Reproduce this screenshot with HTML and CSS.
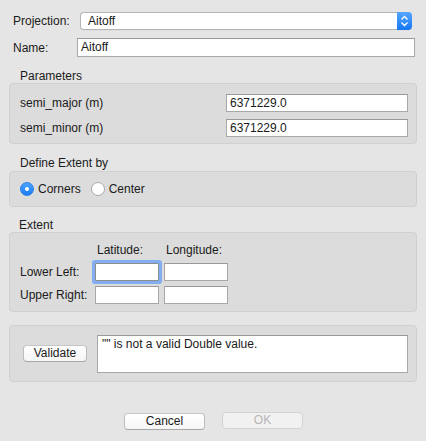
FILE: index.html
```html
<!DOCTYPE html>
<html>
<head>
<meta charset="utf-8">
<link rel="stylesheet" href="styles.css">
</head>
<body>
<div class="dialog">
  <div class="row row-proj">
    <span class="lbl proj-lbl">Projection:</span>
    <div class="popup">
      <span class="popup-text">Aitoff</span>
      <span class="stepper">
        <svg width="15" height="18" viewBox="0 0 15 18"><path d="M4.5 7.5 L7.5 4.5 L10.5 7.5 M4.5 10.5 L7.5 13.5 L10.5 10.5" fill="none" stroke="#fff" stroke-width="1.4"/></svg>
      </span>
    </div>
  </div>
  <div class="row row-name">
    <span class="lbl name-lbl">Name:</span>
    <div class="field name-field">Aitoff</div>
  </div>

  <div class="sec-lbl">Parameters</div>
  <div class="box params">
    <div class="prow"><span class="lbl">semi_major (m)</span><div class="field pfield">6371229.0</div></div>
    <div class="prow"><span class="lbl">semi_minor (m)</span><div class="field pfield">6371229.0</div></div>
  </div>

  <div class="sec-lbl">Define Extent by</div>
  <div class="box define">
    <span class="radio on"></span><span class="lbl rlbl">Corners</span>
    <span class="radio"></span><span class="lbl rlbl">Center</span>
  </div>

  <div class="sec-lbl ext-lbl">Extent</div>
  <div class="box extent">
    <span class="corner"></span><span class="lbl hdr">Latitude:</span><span class="lbl hdr">Longitude:</span>
    <span class="lbl rowlbl">Lower Left:</span><div class="field efield focus"></div><div class="field efield"></div>
    <span class="lbl rowlbl">Upper Right:</span><div class="field efield"></div><div class="field efield"></div>
  </div>

  <div class="box validate">
    <div class="btn vbtn">Validate</div>
    <div class="field msg">"" is not a valid Double value.</div>
  </div>

  <div class="buttons">
    <div class="btn bbtn">Cancel</div>
    <div class="btn bbtn disabled">OK</div>
  </div>
</div>
</body>
</html>
```

FILE: styles.css
```css
html, body {
  margin: 0;
  padding: 0;
  background: #e5e5e5;
}
body {
  font-family: "Liberation Sans", Arial, sans-serif;
  font-size: 12px;
  color: #1a1a1a;
  width: 426px;
  height: 441px;
  overflow: hidden;
}
.dialog {
  display: flex;
  flex-direction: column;
  padding: 12px 9px 0 9px;
}
.row {
  display: flex;
  align-items: center;
}
.lbl {
  line-height: 14px;
  white-space: nowrap;
}
.row-proj {
  height: 18px;
}
.proj-lbl {
  margin-left: 4px;
  width: 67px;
}
.popup {
  flex: 1;
  margin-right: 5px;
  height: 18px;
  box-sizing: border-box;
  display: flex;
  align-items: center;
  background: #fff;
  border: 1px solid #b4b4b4;
  border-right: none;
  border-radius: 4px;
  box-shadow: 0 0.5px 0 rgba(0,0,0,0.05);
}
.popup-text {
  flex: 1;
  padding-left: 7px;
}
.stepper {
  width: 15px;
  height: 18px;
  margin-top: -1px;
  margin-bottom: -1px;
  background: linear-gradient(#55a6ff, #1677f4);
  border-radius: 0 4px 4px 0;
  display: flex;
}
.row-name {
  margin-top: 8px;
  height: 19px;
}
.name-lbl {
  margin-left: 4px;
  width: 64px;
}
.field {
  box-sizing: border-box;
  background: #fff;
  border: 1px solid #a8a8a8;
  border-top-color: #999;
  line-height: 16px;
  padding-left: 3px;
}
.name-field {
  flex: 1;
  height: 19px;
  margin-right: 2px;
  line-height: 17px;
}
.sec-lbl {
  margin-top: 12px;
  padding-left: 11px;
  line-height: 14px;
  height: 14px;
}
.box {
  box-sizing: border-box;
  background: #dcdcdc;
  border: 1px solid #d0d0d0;
  border-radius: 4px;
}
.params {
  padding: 10px 8px 6px 10px;
  display: flex;
  flex-direction: column;
  gap: 7px;
}
.prow {
  display: flex;
  align-items: center;
  justify-content: space-between;
  height: 18px;
}
.pfield {
  width: 182px;
  height: 18px;
}
.define {
  margin-top: 1px;
  height: 36px;
  display: flex;
  align-items: center;
  padding-left: 10px;
}
.radio {
  width: 14px;
  height: 14px;
  box-sizing: border-box;
  border-radius: 50%;
  background: #fff;
  border: 1px solid #a9a9a9;
  margin-right: 4px;
  position: relative;
}
.radio.on {
  background: linear-gradient(#4ea3ff, #1a7cf6);
  border-color: #2a7fe8;
}
.radio.on::after {
  content: "";
  position: absolute;
  left: 4px;
  top: 4px;
  width: 4px;
  height: 4px;
  border-radius: 50%;
  background: #fff;
}
.rlbl {
  margin-right: 10px;
}
.ext-lbl {
  margin-top: 11px;
  padding-left: 10px;
}
.extent {
  display: grid;
  grid-template-columns: 70px 64px 64px;
  grid-template-rows: 14px 18px 18px;
  column-gap: 5px;
  row-gap: 5px;
  padding: 10px 8px 8px 10px;
  align-items: center;
}
.extent .hdr {
  padding-left: 2px;
  align-self: start;
}
.rowlbl,
.efield {
  margin-top: 1px;
}
.efield {
  height: 18px;
}
.focus {
  box-shadow: 0 0 0 3px #82aef0;
  border-radius: 1px;
  border-color: #8d8d8d;
}
.validate {
  margin-top: 13px;
  display: flex;
  align-items: center;
  padding: 9px 8px 8px 13px;
}
.btn {
  box-sizing: border-box;
  height: 17px;
  line-height: 15px;
  text-align: center;
  background: linear-gradient(#ffffff, #f6f6f6);
  border: 1px solid #bcbcbc;
  border-top-color: #c6c6c6;
  border-bottom-color: #a8a8a8;
  border-radius: 4px;
}
.vbtn {
  width: 64px;
  margin-right: 10px;
  margin-top: -2px;
}
.msg {
  flex: 1;
  height: 38px;
  line-height: 14px;
  padding: 1px 4px;
}
.buttons {
  margin-top: 31px;
  display: flex;
  justify-content: center;
  gap: 17px;
  padding-left: 1px;
}
.bbtn {
  width: 81px;
}
.disabled {
  background: #f1f1f1;
  color: #b5b5b5;
  border-color: #d3d3d3;
  margin-top: -1px;
}
```
